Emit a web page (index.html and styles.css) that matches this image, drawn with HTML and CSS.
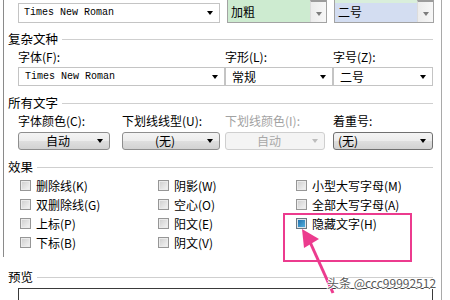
FILE: index.html
```html
<!DOCTYPE html>
<html lang="zh-CN">
<head>
  <meta charset="UTF-8">
  <title>字体</title>
  <link rel="stylesheet" href="styles.css">
</head>
<body>
  <div class="dlg">
    <div class="frame">
      <div class="row top">
        <div class="combo"><span class="mono">Times New Roman</span><i class="arrow"></i></div>
        <div class="list green"><span>加粗</span><div class="sbar"><i class="arrow soft"></i></div></div>
        <div class="list blue"><span>二号</span><div class="sbar"><i class="arrow soft"></i></div></div>
      </div>

      <div class="group">复杂文种</div>
      <div class="row fields">
        <div class="lbl">字体(F):</div>
        <div class="lbl">字形(L):</div>
        <div class="lbl">字号(Z):</div>
        <div class="combo"><span class="mono">Times New Roman</span><i class="arrow"></i></div>
        <div class="combo"><span>常规</span><i class="arrow"></i></div>
        <div class="combo"><span>二号</span><i class="arrow"></i></div>
      </div>

      <div class="group">所有文字</div>
      <div class="row allText">
        <div class="lbl">字体颜色(C):</div>
        <div class="lbl">下划线线型(U):</div>
        <div class="lbl off">下划线颜色(I):</div>
        <div class="lbl">着重号:</div>
        <div class="btn w92"><span>自动</span><i class="arrow"></i></div>
        <div class="btn w98"><span>(无)</span><i class="arrow"></i></div>
        <div class="btn off w100"><span>自动</span><i class="arrow"></i></div>
        <div class="btn left w100"><span>(无)</span><i class="arrow"></i></div>
      </div>

      <div class="group">效果</div>
      <div class="row checks">
        <div class="chk"><i class="box"></i>删除线(K)</div>
        <div class="chk"><i class="box"></i>阴影(W)</div>
        <div class="chk"><i class="box"></i>小型大写字母(M)</div>
        <div class="chk"><i class="box"></i>双删除线(G)</div>
        <div class="chk"><i class="box"></i>空心(O)</div>
        <div class="chk"><i class="box"></i>全部大写字母(A)</div>
        <div class="chk"><i class="box"></i>上标(P)</div>
        <div class="chk"><i class="box"></i>阳文(E)</div>
        <div class="chk"><i class="box on"></i>隐藏文字(H)</div>
        <div class="chk"><i class="box"></i>下标(B)</div>
        <div class="chk"><i class="box"></i>阴文(V)</div>
      </div>
    </div>

    <div class="group preview-title">预览</div>
    <div class="preview"></div>

    <svg class="mark" width="450" height="300" viewBox="0 0 450 300">
      <rect x="284" y="214" width="127" height="47" fill="none" stroke="#ec3b8e" stroke-width="2"/>
      <line x1="333" y1="293" x2="310" y2="242" stroke="#ec3b8e" stroke-width="3"/>
      <polygon points="302,229 319,239 304,248" fill="#ec3b8e"/>
    </svg>
    <div class="watermark">头条 @ccc99992512</div>
  </div>
</body>
</html>
```

FILE: styles.css
```css
body {
  margin: 0;
  background: #fff;
  font-family: "Noto Sans CJK SC", "Noto Sans", sans-serif;
  font-size: 12px;
  color: #000;
}

.dlg {
  position: relative;
  width: 442px;
  height: 300px;
  border-right: 1px solid #a9a9a9;
  box-sizing: border-box;
  overflow: hidden;
}

.frame {
  margin-left: 3px;
  border-left: 1px solid #8a8a8a;
  padding: 0 8px 5px 4px;
}

.row {
  margin-left: 10px;
}

.mono {
  font-family: "Liberation Mono", monospace;
  font-size: 10px;
}

.arrow {
  width: 0;
  height: 0;
  border-top: 4px solid #000;
  border-left: 3.5px solid transparent;
  border-right: 3.5px solid transparent;
}

.arrow.soft {
  border-top-color: #7c7c7c;
}

/* first row: font box + two list boxes */
.top {
  display: grid;
  grid-template-columns: 209px 107px 99px;
  height: 23px;
}

.combo {
  display: flex;
  align-items: center;
  justify-content: space-between;
  box-sizing: border-box;
  height: 19px;
  padding: 0 6px 0 6px;
  border: 1px solid #c4c4c4;
  background: #fff;
  line-height: 16px;
}

.top .combo {
  width: 202px;
  height: 20px;
  margin-top: 3px;
  padding-left: 5px;
}

.list {
  display: flex;
  box-sizing: border-box;
  height: 23px;
  width: 100px;
  border: 1px solid #a3a3a3;
  border-top: none;
}

.list span {
  flex: 1;
  padding: 4px 0 0 3px;
  line-height: 16px;
}

.list.green span {
  background: #cdebd0;
}

.list.blue span {
  background: linear-gradient(#d9eedb 0 3px, #d3ddf1 3px);
}

.sbar {
  width: 16px;
  display: flex;
  align-items: center;
  justify-content: center;
  padding-top: 3px;
  background: linear-gradient(90deg, #ececec, #f7f7f7);
  border-left: 1px solid #dcdcdc;
  border-top: 2px solid #9c9c9c;
  box-sizing: border-box;
}

/* group headings with a rule */
.group {
  display: flex;
  align-items: center;
  gap: 4px;
  line-height: 16px;
  font-size: 12.5px;
  margin-top: 9px;
}

.group::after {
  content: '';
  flex: 1;
  border-top: 1px solid #cfcfcf;
}

.frame > .group:nth-child(2) {
  margin-top: 8px;
}

.lbl {
  line-height: 16px;
}

.lbl.off {
  color: #a2a2a2;
}

.fields {
  display: grid;
  grid-template-columns: 207px 108px 100px;
  row-gap: 2px;
  margin-top: 2px;
}

.fields .combo:first-of-type {
  width: 202px;
}

.allText {
  display: grid;
  grid-template-columns: 104px 103px 108px 100px;
  row-gap: 3px;
  margin-top: 2px;
}

.btn {
  display: flex;
  align-items: center;
  box-sizing: border-box;
  height: 18px;
  padding-right: 6px;
  border: 1px solid #8e8e8e;
  border-radius: 3px;
  background: linear-gradient(#f4f4f4 0%, #ececec 48%, #dedede 52%, #d2d2d2 100%);
  line-height: 16px;
}

.btn span {
  flex: 1;
  text-align: center;
}

.btn.left span {
  text-align: left;
  padding-left: 4px;
}

.btn.left {
  border-color: #707070;
}

.btn.off {
  border-color: #cfcfcf;
  background: #f4f4f4;
  color: #a8a8a8;
}

.btn.off .arrow {
  border-top-color: #bdbdbd;
}

.w92 { width: 92px; }
.w98 { width: 98px; }
.w100 { width: 100px; }

/* effects check boxes */
.checks {
  display: grid;
  grid-template-columns: 138px 138px 1fr;
  grid-auto-rows: 19px;
  margin: 1px 0 0 12px;
}

.chk {
  display: flex;
  align-items: center;
  gap: 5px;
}

.box {
  width: 11px;
  height: 11px;
  box-sizing: border-box;
  border: 1px solid #969696;
  background: linear-gradient(135deg, #cdcdcd, #f5f5f5);
  box-shadow: inset 0 0 0 1px #ebebeb;
}

.box.on {
  border-color: #6b7882;
  background: linear-gradient(135deg, #1a68a5, #58b8e6);
  box-shadow: inset 0 0 0 1px #dde4ea;
}

.preview-title {
  margin: 12px 8px 0 8px;
}

.preview {
  margin: 3px 0 0 18px;
  width: 415px;
  height: 40px;
  border: 1px solid #3a3a3a;
  box-sizing: border-box;
}

.mark {
  position: absolute;
  left: 0;
  top: 0;
  pointer-events: none;
}

.watermark {
  position: absolute;
  left: 327px;
  top: 276px;
  line-height: 14px;
  font-size: 12px;
  color: #5a5a5a;
  white-space: nowrap;
  text-shadow: 0 0 1px #fff, 1px 0 0 #fff, -1px 0 0 #fff, 0 1px 0 #fff, 0 -1px 0 #fff;
}
```
